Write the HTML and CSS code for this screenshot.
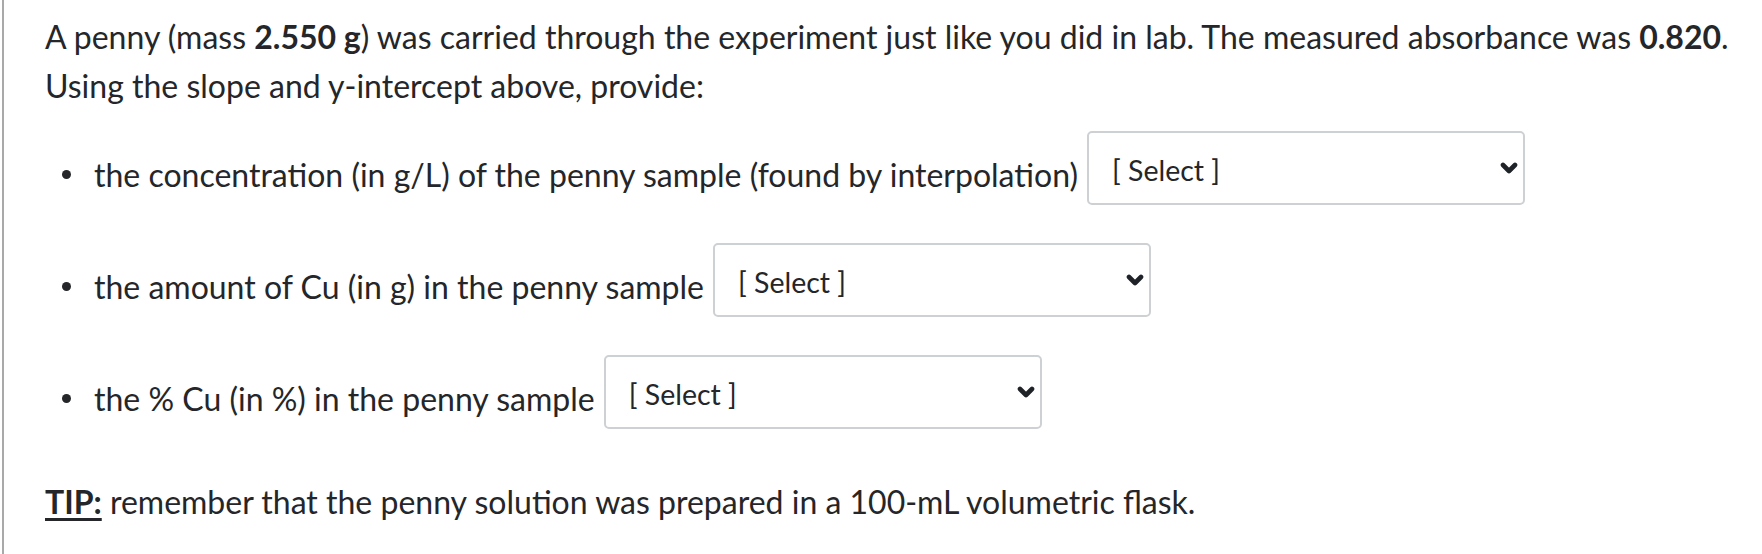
FILE: index.html
```html
<!DOCTYPE html>
<html lang="en">
<head>
<meta charset="utf-8">
<title>Penny question</title>
<link rel="stylesheet" href="styles.css">
</head>
<body>
<div class="question">
  <p class="intro">A penny (mass <strong>2.550 g</strong>) was carried through the experiment just like you did in lab. The measured absorbance was <strong>0.820</strong>.<br>Using the slope and y-intercept above, provide:</p>
  <ul class="items">
    <li class="item">
      <span class="bullet"></span>
      <span class="label">the concentration (in g/L) of the penny sample (found by interpolation)</span>
      <div class="select"><span class="select-text">[ Select ]</span><svg class="chev" width="18" height="12" viewBox="0 0 18 12"><polyline points="3,3 9,9 15,3" fill="none" stroke="#1f2226" stroke-width="4.6" stroke-linecap="round" stroke-linejoin="round"/></svg></div>
    </li>
    <li class="item">
      <span class="bullet"></span>
      <span class="label">the amount of Cu (in g) in the penny sample</span>
      <div class="select"><span class="select-text">[ Select ]</span><svg class="chev" width="18" height="12" viewBox="0 0 18 12"><polyline points="3,3 9,9 15,3" fill="none" stroke="#1f2226" stroke-width="4.6" stroke-linecap="round" stroke-linejoin="round"/></svg></div>
    </li>
    <li class="item">
      <span class="bullet"></span>
      <span class="label">the % Cu (in %) in the penny sample</span>
      <div class="select"><span class="select-text">[ Select ]</span><svg class="chev" width="18" height="12" viewBox="0 0 18 12"><polyline points="3,3 9,9 15,3" fill="none" stroke="#1f2226" stroke-width="4.6" stroke-linecap="round" stroke-linejoin="round"/></svg></div>
    </li>
  </ul>
  <p class="tip"><strong class="tip-label">TIP:</strong> remember that the penny solution was prepared in a 100-mL volumetric flask.</p>
</div>
</body>
</html>
```
FILE: styles.css
```css
html, body {
  margin: 0;
  padding: 0;
  background: #ffffff;
}

body {
  font-family: Lato, "Noto Sans", sans-serif;
  color: #242629;
  font-size: 32px;
  line-height: 49px;
}

.question {
  margin-left: 2px;
  border-left: 2px solid #a9a9a9;
  padding: 12px 0 0 41px;
  min-height: 100vh;
  box-sizing: border-box;
}

.intro {
  margin: 0;
}

strong {
  font-weight: 700;
}

.items {
  list-style: none;
  margin: 21px 0 0 0;
  padding: 0;
  display: flex;
  flex-direction: column;
  gap: 38px;
}

.item {
  display: flex;
  align-items: center;
  height: 74px;
}

.bullet {
  width: 9px;
  height: 9px;
  border-radius: 50%;
  background: #242629;
  margin: 13px 23px 0 17px;
  flex: none;
}

.label {
  padding-top: 13px;
  margin-right: 9px;
  white-space: nowrap;
}

.select {
  width: 438px;
  height: 74px;
  box-sizing: border-box;
  border: 2px solid #cdd1d4;
  border-radius: 5px;
  display: flex;
  align-items: center;
  justify-content: space-between;
  padding: 0 5px 0 23px;
  background: #fff;
  flex: none;
}

.select-text {
  font-size: 28.5px;
  margin-top: 4px;
  color: #242629;
}

.chev {
  display: block;
}

.tip {
  margin: 48px 0 0 0;
}

.tip-label {
  text-decoration: underline;
  text-underline-offset: 4px;
}
```
